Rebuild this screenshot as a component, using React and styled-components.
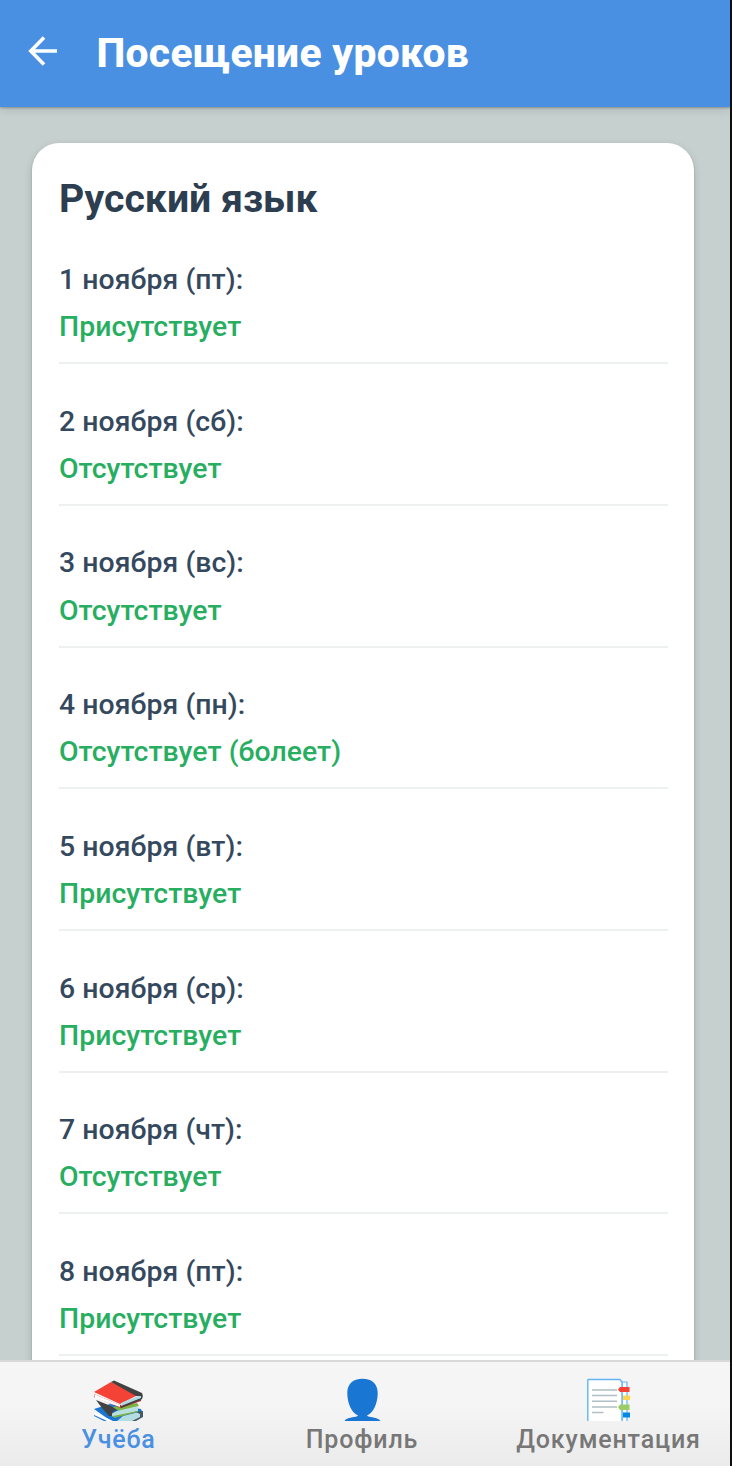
import React from "react";
import styled, { createGlobalStyle } from "styled-components";

const GlobalStyle = createGlobalStyle`
  body { margin: 0; background: #0d0e0e; font-family: Roboto, "Liberation Sans", sans-serif; }
  * { box-sizing: border-box; }
`;

const Screen = styled.div`
  display: flex;
  flex-direction: column;
  width: 730px;
  height: 1466px;
  overflow: hidden;
  background: #c5d0cf;
`;

const Header = styled.header`
  display: flex;
  align-items: center;
  flex: none;
  height: 107px;
  padding-left: 28px;
  background: #4a90e2;
  box-shadow: 0 1px 2px rgba(0, 0, 0, 0.25), 0 3px 9px rgba(0, 0, 0, 0.11);
  z-index: 1;
`;

const BackIcon = styled.svg`
  width: 30px;
  height: 30px;
  margin: 0 38.5px 5px 0;
`;

const Title = styled.h1`
  margin: 0 0 2px;
  color: #fff;
  font-size: 40.8px;
  line-height: 48px;
  font-weight: 800;
  letter-spacing: 0.3px;
  white-space: nowrap;
`;

const Content = styled.main`
  flex: 1;
  min-height: 0;
  padding: 36px 36px 0 32px;
  overflow: hidden;
`;

const Card = styled.section`
  height: 1400px;
  padding: 32px 26px 0 27px;
  border-radius: 27px;
  background: #fff;
  box-shadow: 0 1px 2px rgba(0, 0, 0, 0.2), 0 3px 9px rgba(0, 0, 0, 0.15);
`;

const Subject = styled.h2`
  margin: 0 0 27px;
  color: #2c3e50;
  font-size: 39.2px;
  line-height: 48px;
  font-weight: 700;
`;

const Row = styled.div`
  height: 141.7px;
`;

const Entry = styled.div`
  height: 114.2px;
  padding-top: 11.1px;
  border-bottom: 2px solid #ecf0f1;
`;

const Line = styled.div`
  height: 47.2px;
  color: ${(p) => (p.$status ? "#27ae60" : "#34495e")};
  font-size: 28.4px;
  line-height: 38px;
  font-weight: 500;
  letter-spacing: ${(p) => (p.$status ? 0.03 : 0.07)}px;
`;

const TabBar = styled.nav`
  display: flex;
  flex: none;
  justify-content: space-between;
  height: 106px;
  padding: 16px 30px 0;
  border-top: 2px solid #d8d8d8;
  background: linear-gradient(#f5f5f5 40%, #ebebeb);
  z-index: 1;
`;

const Tab = styled.div`
  display: flex;
  flex-direction: column;
  align-items: center;
  width: ${(p) => p.$width}px;
  color: ${(p) => (p.$active ? "#4a90e2" : "#777")};
`;

const TabIcon = styled.svg`
  flex: none;
  width: 52px;
  height: 43px;
`;

const TabLabel = styled.span`
  margin-top: 2px;
  font-size: 25px;
  line-height: 34px;
  font-weight: 500;
  letter-spacing: 0.85px;
  white-space: nowrap;
`;

const Books = () => (
  <TabIcon viewBox="0 0 52 43">
    <path d="M1 31 17 26 48 31 50 36 49 39 41 43H18Z" fill="#1976d2" />
    <path d="M1 34 20 43H15L2 37Z" fill="#fff" />
    <path d="M1 37 14 43H11L1 38Z" fill="#1976d2" />
    <path d="M24 43 30 38 46 34 49 35V39L42 43Z" fill="#b4dce3" />
    <path d="M43 34 50 33V39L43 43H39L47 39V36Z" fill="#455a64" />
    <path d="M19 29 44 25 46 28 28 34Z" fill="#7cb342" />
    <path d="M18 36 24 33 45 28V33L20 39Z" fill="#b9e0df" />
    <path d="M20 38 45 33V34L21 40Z" fill="#7cb342" />
    <path d="M3 22 18 28 24 32Q18 33 19 38L16 38Q11 33 3 22Z" fill="#424242" />
    <path d="M1 16 27 27 48 20V23L28 30 1 19Z" fill="#c62828" />
    <path d="M1 16 27 27V29L2 20Z" fill="#fff" />
    <path d="M1 14 18 4 45 17 27 26Z" fill="#f44336" />
    <path d="M18 4 21 2.5 49 15Q51 19 48 22L28 30V28L47 20V18L43 18Z" fill="#424242" />
    <path d="M28 25 45 18 48 18V20L28 28Z" fill="#b0dce5" />
  </TabIcon>
);

const Person = () => (
  <TabIcon viewBox="0 0 52 43">
    <path d="M26.5 0.8C17 0.8 11.3 6 11.3 15C11.3 26 16 35 22 37.5C21 39.5 10 39 8.5 43H44.5C42.5 39 32 39.5 31 37.5C37 35 41.7 26 41.7 15C41.7 6 36 0.8 26.5 0.8Z" fill="#1976d2" />
  </TabIcon>
);

const Pages = () => (
  <TabIcon viewBox="0 0 52 43">
    <path d="M39 43V4H44V43" fill="#fff" stroke="#64b5f6" strokeWidth="1.2" />
    <path d="M4.8 43V2Q4.8 1.5 5.3 1.5H37L39 4V43" fill="#fff" stroke="#64b5f6" strokeWidth="1.4" />
    <path d="M9 12H34M9 17.5H34M9 23.3H34M9 29H34M9 34.5H20.5" stroke="#b0bec5" strokeWidth="1.5" />
    <path d="M35 11.5 37 9H46.5V14H37Z" fill="#f44336" />
    <path d="M40 17.5H47V22H40Z" fill="#ffd54f" />
    <path d="M35 29 37 26.5H46.5V32H37Z" fill="#9ccc65" />
    <path d="M40 34.5H47V39.5H40Z" fill="#0288e5" />
  </TabIcon>
);

const ABSENT = "Отсутствует";
const PRESENT = "Присутствует";

const days = [
  ["1 ноября (пт):", PRESENT],
  ["2 ноября (сб):", ABSENT],
  ["3 ноября (вс):", ABSENT],
  ["4 ноября (пн):", "Отсутствует (болеет)"],
  ["5 ноября (вт):", PRESENT],
  ["6 ноября (ср):", PRESENT],
  ["7 ноября (чт):", ABSENT],
  ["8 ноября (пт):", PRESENT],
];

export default function App() {
  return (
    <>
      <GlobalStyle />
      <Screen>
        <Header>
          <BackIcon viewBox="0 0 30 30" fill="none" stroke="#fff" strokeWidth="3.6">
            <path d="M29 15H3M16 1.5 2.8 15 16 28.5" />
          </BackIcon>
          <Title>Посещение уроков</Title>
        </Header>
        <Content>
          <Card>
            <Subject>Русский язык</Subject>
            {days.map(([date, status]) => (
              <Row key={date}>
                <Entry>
                  <Line>{date}</Line>
                  <Line $status>{status}</Line>
                </Entry>
              </Row>
            ))}
          </Card>
        </Content>
        <TabBar>
          <Tab $active $width={177}>
            <Books />
            <TabLabel>Учёба</TabLabel>
          </Tab>
          <Tab $width={180}>
            <Person />
            <TabLabel>Профиль</TabLabel>
          </Tab>
          <Tab $width={183}>
            <Pages />
            <TabLabel>Документация</TabLabel>
          </Tab>
        </TabBar>
      </Screen>
    </>
  );
}
